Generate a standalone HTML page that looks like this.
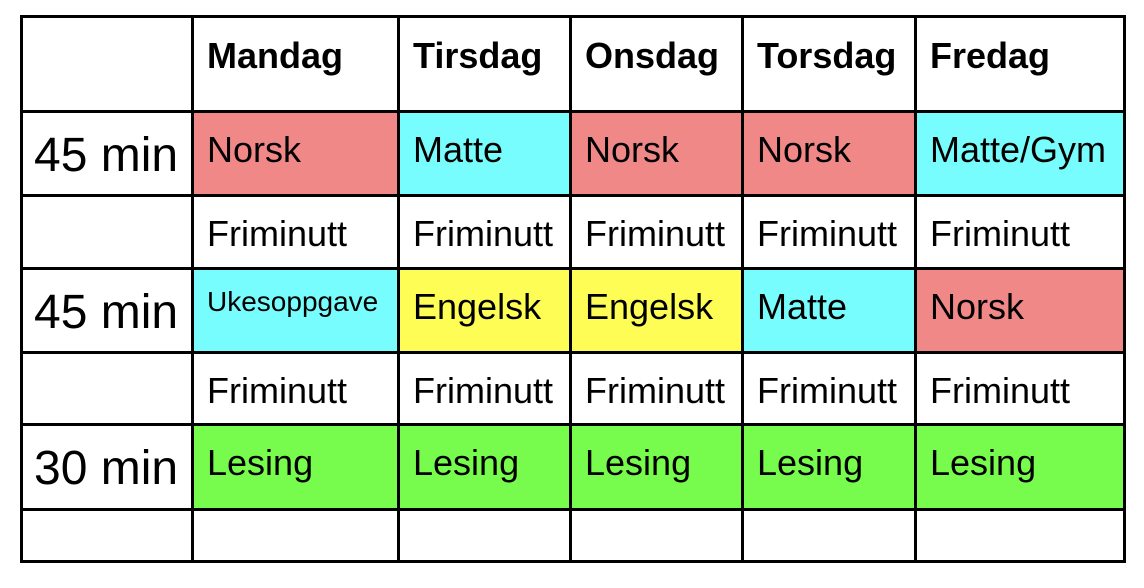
<!DOCTYPE html>
<html><head><meta charset="utf-8"><style>
body{margin:0;width:1144px;height:588px;background:#fff;position:relative;overflow:hidden;font-family:"Liberation Sans",Arial,sans-serif;}
.c{position:absolute;box-sizing:border-box;padding-left:13px;font-size:36px;line-height:36px;color:#000;white-space:nowrap;overflow:hidden;}
.l{position:absolute;background:#000;}
.r{background:#f08888}.cy{background:#77fdfd}.y{background:#fdfd55}.g{background:#77fb4d}
</style></head><body>
<div id="cells"></div>
<script>
const xs=[20,191,397,569,741,914,1123];
const ys=[15,110,194,267,351,423,508,560];
const rows=[
 [["",""],["<b>Mandag</b>",""],["<b>Tirsdag</b>",""],["<b>Onsdag</b>",""],["<b>Torsdag</b>",""],["<b>Fredag</b>",""]],
 [["45 min","t"],["Norsk","r"],["Matte","cy"],["Norsk","r"],["Norsk","r"],["Matte/Gym","cy"]],
 [["",""],["Friminutt",""],["Friminutt",""],["Friminutt",""],["Friminutt",""],["Friminutt",""]],
 [["45 min","t"],["Ukesoppgave","cy u"],["Engelsk","y"],["Engelsk","y"],["Matte","cy"],["Norsk","r"]],
 [["",""],["Friminutt",""],["Friminutt",""],["Friminutt",""],["Friminutt",""],["Friminutt",""]],
 [["30 min","t"],["Lesing","g"],["Lesing","g"],["Lesing","g"],["Lesing","g"],["Lesing","g"]],
 [["",""],["",""],["",""],["",""],["",""],["",""]]
];
let h="";
rows.forEach((row,ri)=>{row.forEach((c,ci)=>{
 const x=xs[ci]+3,y=ys[ri]+3,w=xs[ci+1]-x,hh=ys[ri+1]-y;
 let cls=c[1],st="";
 let pt=19;
 if(cls=="t"){st="font-size:48px;line-height:48px;padding-left:11px;";pt=19;cls="";}
 if(cls.includes("u")){st="font-size:28px;line-height:28px;";pt=18;}
 if(ri==0)pt=20;
 h+=`<div class="c ${cls}" style="left:${x}px;top:${y}px;width:${w}px;height:${hh}px;padding-top:${pt}px;${st}">${c[0]}</div>`;
});});
xs.forEach(x=>h+=`<div class="l" style="left:${x}px;top:15px;width:3px;height:548px"></div>`);
ys.forEach(y=>h+=`<div class="l" style="left:20px;top:${y}px;width:1106px;height:3px"></div>`);
document.getElementById("cells").innerHTML=h;
</script>
</body></html>
